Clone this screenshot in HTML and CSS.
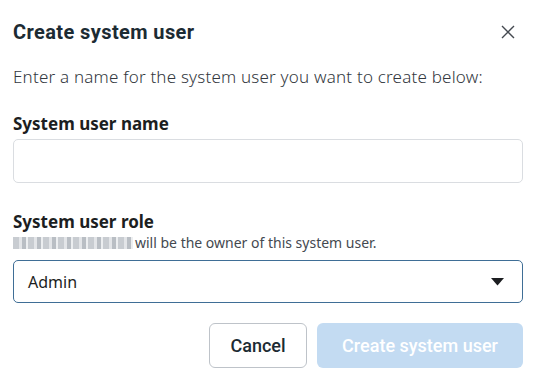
FILE: index.html
```
<!DOCTYPE html>
<html lang="en">
<head>
    <meta charset="UTF-8">
    <meta name="viewport" content="width=device-width, initial-scale=1.0">
    <title>Create system user</title>
    <link rel="stylesheet" href="styles.css">
</head>
<body>
    <div class="dialog">
        <div class="dialog-header">
            <h1>Create system user</h1>
            <button class="close-button" aria-label="Close">
                <svg width="14" height="14" viewBox="0 0 14 14">
                    <path d="M1 1L13 13M13 1L1 13" stroke="#444950" stroke-width="1.4" fill="none"/>
                </svg>
            </button>
        </div>
        <p class="intro-text">Enter a name for the system user you want to create below:</p>

        <label class="field-label" for="user-name">System user name</label>
        <input class="text-input" id="user-name" type="text">

        <label class="field-label role-label" for="user-role">System user role</label>
        <p class="hint"><span class="blurred" aria-hidden="true"></span>will be the owner of this system user.</p>
        <div class="select-box" id="user-role">
            <span>Admin</span>
            <svg width="13" height="8" viewBox="0 0 13 8">
                <path d="M0 0H13L6.5 7.5Z" fill="#1c1e21"/>
            </svg>
        </div>

        <div class="actions">
            <button class="cancel-button">Cancel</button>
            <button class="create-button" disabled>Create system user</button>
        </div>
    </div>
</body>
</html>
```

FILE: styles.css
```
body {
    margin: 0;
    background: #fff;
    font-family: "Noto Sans", sans-serif;
    color: #1c1e21;
}
.dialog {
    padding: 0 12px 0 13px;
}
.dialog-header {
    display: flex;
    justify-content: space-between;
    align-items: center;
    height: 64px;
}
.dialog-header h1 {
    margin: 0;
    font-family: "Roboto", sans-serif;
    font-size: 20px;
    font-weight: 700;
    letter-spacing: 0.4px;
    color: #1c2b33;
}
.close-button {
    border: none;
    background: none;
    padding: 0;
    margin-right: 8px;
    width: 14px;
    height: 14px;
    cursor: pointer;
}
.intro-text {
    margin: 2px 0 0;
    font-size: 17px;
    font-weight: 300;
    letter-spacing: 0.2px;
    color: #333840;
    line-height: 22px;
}
.field-label {
    display: block;
    margin-top: 26px;
    font-size: 17px;
    font-weight: 700;
    line-height: 20px;
    color: #1c1e21;
}
.role-label {
    margin-top: 29px;
}
.text-input {
    display: block;
    box-sizing: border-box;
    width: 100%;
    height: 44px;
    margin-top: 5px;
    border: 1px solid #dadde1;
    border-radius: 5px;
    font: inherit;
}
.hint {
    margin: 0;
    font-size: 14px;
    color: #444950;
    line-height: 22px;
    display: flex;
    align-items: center;
}
.blurred {
    display: inline-block;
    width: 120px;
    height: 12px;
    margin-right: 2px;
    background: repeating-linear-gradient(90deg, #c8ccd1 0 6px, #e3e5e8 6px 9px, #b9bec4 9px 13px, #eceef0 13px 15px);
}
.select-box {
    display: flex;
    justify-content: space-between;
    align-items: center;
    box-sizing: border-box;
    height: 43px;
    margin-top: 6px;
    padding: 0 18px 0 14px;
    border: 1px solid #3f6e96;
    border-radius: 5px;
    font-size: 16px;
    color: #1c1e21;
}
.actions {
    display: flex;
    justify-content: flex-end;
    gap: 10px;
    margin-top: 20px;
}
.actions button {
    height: 45px;
    border-radius: 6px;
    font-family: "Roboto", sans-serif;
    font-size: 18px;
    font-weight: 500;
    padding: 0;
}
.cancel-button {
    width: 98px;
    background: #fff;
    border: 1px solid #bec3c9;
    color: #1c2b33;
}
.create-button {
    width: 206px;
    background: #c3dbf2;
    border: none;
    color: #fff;
}
```
